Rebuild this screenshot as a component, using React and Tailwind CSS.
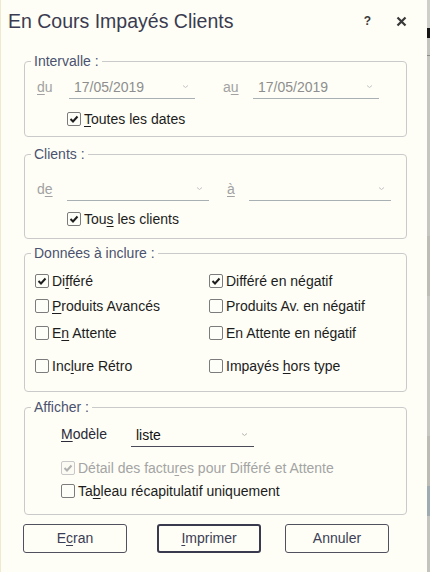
import React from 'react';

const Chevron = ({ light }) => (
  <svg width="7" height="5" viewBox="0 0 7 5" className="shrink-0">
    <path d="M1 1.5 L3.5 3.5 L6 1.5" fill="none" stroke={light ? '#c4c4c4' : '#b4b4b4'} strokeWidth="1" />
  </svg>
);

const Check = ({ checked, disabled }) => (
  <span
    className={`w-[14px] h-[14px] shrink-0 rounded-[2px] border flex items-center justify-center ${
      disabled ? 'border-[#c8c8c8] bg-[#fbfbf4]' : 'border-[#7c7c7c] bg-[#fefef8]'
    }`}
  >
    {checked && (
      <svg width="10" height="10" viewBox="0 0 10 10">
        <path
          d="M1.5 5 L4 7.5 L8.5 2.5"
          fill="none"
          stroke={disabled ? '#b0b0b0' : '#1e1e1e'}
          strokeWidth="2"
        />
      </svg>
    )}
  </span>
);

const CheckRow = ({ checked, disabled, children, className = '' }) => (
  <div className={`flex items-center h-[14px] gap-[3px] ${className}`}>
    <Check checked={checked} disabled={disabled} />
    <span className={`leading-[16px] whitespace-nowrap ${disabled ? 'text-[#a4a4a4]' : 'text-[#1c1c1c]'}`}>
      {children}
    </span>
  </div>
);

const Combo = ({ value, width, dark, dim }) => (
  <div
    className={`${width} h-[24px] flex items-center justify-between pl-[5px] pr-[6px] border-b ${
      dark ? 'border-[#4a4a58]' : 'border-[#a8b0b4]'
    }`}
  >
    <span className={`leading-[16px] ${dim ? 'text-[#8e8e8e]' : 'text-[#111111]'}`}>{value}</span>
    <Chevron light={dim} />
  </div>
);

const Group = ({ title, className = '', children }) => (
  <fieldset className={`ml-[23px] w-[383px] border border-[#cacaca] rounded-[4px] ${className}`}>
    <legend className="ml-[6px] px-[3px] text-[14px] leading-[16px] text-[#4b5270]">{title}</legend>
    {children}
  </fieldset>
);

const U = ({ children }) => <u className="underline underline-offset-[2px] decoration-1">{children}</u>;

const Button = ({ children, primary, className = '' }) => (
  <button
    className={`w-[104px] h-[29px] rounded-[3px] text-[14px] text-[#3b3d55] bg-[#fefef6] ${
      primary ? 'border-2 border-[#3a3a4e]' : 'border border-[#50505e]'
    } ${className}`}
  >
    {children}
  </button>
);

export default function App() {
  return (
    <div className="w-[430px] h-[572px] flex overflow-hidden font-['Liberation_Sans',Arial,sans-serif] text-[14px]">
      <div className="w-[427px] h-full bg-[#fefef6] border-l border-[#efe9d2] flex flex-col">
        {/* title bar */}
        <div className="h-[53px] flex items-start pt-[10px] pl-[7px] pr-[20px]">
          <h1 className="flex-1 text-[19.5px] leading-[22px] text-[#3a3b50]">En Cours Impayés Clients</h1>
          <span className="mt-[3px] text-[12px] font-bold text-[#3a3a3a] leading-[16px]">?</span>
          <svg width="11" height="11" viewBox="0 0 11 11" className="ml-[25px] mt-[6px]">
            <path d="M1.5 1.5 L9.5 9.5 M9.5 1.5 L1.5 9.5" stroke="#383838" strokeWidth="2.2" />
          </svg>
        </div>

        <Group title="Intervalle :" className="pb-[10px]">
          <div className="mt-[6px] pl-[12px] flex items-center">
            <span className="w-[32px] text-[#a2a2a2] leading-[16px]"><U>d</U>u</span>
            <Combo value="17/05/2019" width="w-[126px]" dim />
            <span className="ml-[28px] w-[30px] text-[#a2a2a2] leading-[16px]">a<U>u</U></span>
            <Combo value="17/05/2019" width="w-[126px]" dim />
          </div>
          <CheckRow checked className="mt-[13px] pl-[42px]"><U>T</U>outes les dates</CheckRow>
        </Group>

        <Group title="Clients :" className="mt-[9px] pb-[12px]">
          <div className="mt-[15px] pl-[12px] flex items-center">
            <span className="w-[30px] text-[#a2a2a2] leading-[16px]">d<U>e</U></span>
            <Combo value="" width="w-[142px]" dim />
            <span className="ml-[18px] w-[22px] text-[#a2a2a2] leading-[16px]"><U>à</U></span>
            <Combo value="" width="w-[142px]" dim />
          </div>
          <CheckRow checked className="mt-[11px] pl-[42px]">Tou<U>s</U> les clients</CheckRow>
        </Group>

        <Group title="Données à inclure :" className="mt-[6px] pb-[18px]">
          <div className="mt-[13px] pl-[10px] flex">
            <CheckRow checked className="w-[174px]">Di<U>f</U>féré</CheckRow>
            <CheckRow checked>Différé en négatif</CheckRow>
          </div>
          <div className="mt-[11px] pl-[10px] flex">
            <CheckRow className="w-[174px]"><U>P</U>roduits Avancés</CheckRow>
            <CheckRow>Produits Av. en négatif</CheckRow>
          </div>
          <div className="mt-[13px] pl-[10px] flex">
            <CheckRow className="w-[174px]">E<U>n</U> Attente</CheckRow>
            <CheckRow>En Attente en négatif</CheckRow>
          </div>
          <div className="mt-[19px] pl-[10px] flex">
            <CheckRow className="w-[174px]">Inc<U>l</U>ure Rétro</CheckRow>
            <CheckRow>Impayés <U>h</U>ors type</CheckRow>
          </div>
        </Group>

        <Group title="Afficher :" className="mt-[7px] pb-[16px]">
          <div className="mt-[8px] pl-[36px] flex items-center">
            <span className="w-[70px] text-[#2a2a38] leading-[16px] -mt-[2px]"><U>M</U>odèle</span>
            <Combo value="liste" width="w-[123px]" dark />
          </div>
          <CheckRow checked disabled className="mt-[14px] pl-[36px]">Détail des factu<U>r</U>es pour Différé et Attente</CheckRow>
          <CheckRow className="mt-[9px] pl-[36px]">Ta<U>b</U>leau récapitulatif uniquement</CheckRow>
        </Group>

        <div className="mt-[9px] flex">
          <Button className="ml-[22px]">E<U>c</U>ran</Button>
          <Button primary className="ml-[30px]"><U>I</U>mprimer</Button>
          <Button className="ml-[24px]">Annuler</Button>
        </div>
      </div>

      {/* edge of the window behind */}
      <div className="w-[3px] h-full flex flex-col">
        <div className="h-[28px] bg-[#cfcfca]" />
        <div className="h-[10px] bg-[#141414]" />
        <div className="h-[17px] bg-[#c4c4be]" />
        <div className="h-[1px] bg-[#8c8c88]" />
        <div className="h-[180px] bg-[#c6c6c0]" />
        <div className="h-[60px] bg-[#bdbdb6]" />
        <div className="h-[140px] bg-[#c8c8c2]" />
        <div className="h-[50px] bg-[#bcbcb4]" />
        <div className="h-[30px] bg-[#9eacb2]" />
        <div className="flex-1 bg-[#c4c4be]" />
      </div>
    </div>
  );
}
